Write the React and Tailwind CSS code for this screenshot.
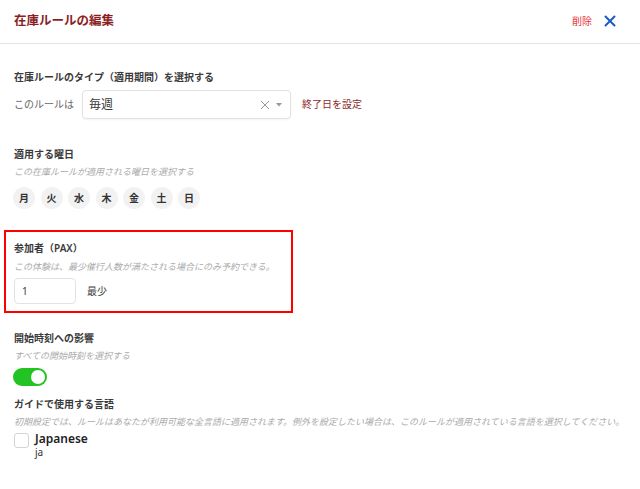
import React, { useState } from 'react'

const days = ['月', '火', '水', '木', '金', '土', '日']

export default function App() {
  const [on, setOn] = useState(true)
  const [checked, setChecked] = useState(false)

  return (
    <div className="w-[640px] h-[489px] bg-white overflow-hidden font-['Noto_Sans','Noto_Sans_CJK_JP',sans-serif] text-[#3a3a3a]">
      {/* Header */}
      <div className="h-[44px] border-b border-[#e4e4e4] flex items-center justify-between pl-[14px] pr-[24px]">
        <h1 className="text-[12.5px] font-bold text-[#8b1f1f] leading-none -mt-[1px]">在庫ルールの編集</h1>
        <div className="flex items-center gap-[12px] -mt-[1px]">
          <button className="text-[10px] text-[#e8343c] leading-none">削除</button>
          <svg width="12" height="12" viewBox="0 0 12 12" className="text-[#1a5bc7]">
            <path d="M1.5 1.5 L10.5 10.5 M10.5 1.5 L1.5 10.5" stroke="currentColor" strokeWidth="2" strokeLinecap="round" />
          </svg>
        </div>
      </div>

      <div className="px-[14px]">
        {/* Rule type */}
        <p className="mt-[26px] text-[10px] leading-[14px] font-semibold">在庫ルールのタイプ（適用期間）を選択する</p>
        <div className="mt-[6px] h-[29px] flex items-center">
          <span className="text-[10px] text-[#666] w-[68px]">このルールは</span>
          <div className="w-[209px] h-[29px] border border-[#e2e2e2] rounded-[4px] shadow-[0_1px_2px_rgba(0,0,0,0.05)] flex items-center pl-[6px] pr-[8px]">
            <span className="text-[12px] flex-1">毎週</span>
            <svg width="10" height="10" viewBox="0 0 10 10" className="text-[#9a9a9a]">
              <path d="M1 1 L9 9 M9 1 L1 9" stroke="currentColor" strokeWidth="1" />
            </svg>
            <svg width="6" height="4" viewBox="0 0 6 4" className="ml-[6px] text-[#999]">
              <path d="M0 0 L6 0 L3 3.5 Z" fill="currentColor" />
            </svg>
          </div>
          <button className="ml-[11px] text-[10px] text-[#8b2a2a]">終了日を設定</button>
        </div>

        {/* Days */}
        <p className="mt-[28px] text-[10px] leading-[14px] font-semibold">適用する曜日</p>
        <p className="mt-[4px] text-[9px] leading-[14px] italic text-[#aaa]">この在庫ルールが適用される曜日を選択する</p>
        <div className="mt-[8px] flex gap-[5.5px] -ml-[1px]">
          {days.map((d) => (
            <button key={d} className="w-[22px] h-[22px] rounded-full bg-[#f2f2f2] text-[10px] font-bold text-[#333] flex items-center justify-center">
              {d}
            </button>
          ))}
        </div>

        {/* PAX highlighted */}
        <div className="mt-[21px] -ml-[10px] w-[289px] border-2 border-[#ff0000] pl-[8px] pt-[9px] pb-[7px]">
          <p className="text-[10px] leading-[14px] font-semibold">参加者（PAX）</p>
          <p className="mt-[5px] text-[9px] leading-[14px] italic text-[#aaa]">この体験は、最少催行人数が満たされる場合にのみ予約できる。</p>
          <div className="mt-[4px] flex items-center">
            <div className="w-[62px] h-[26px] border border-[#e2e2e2] rounded-[4px] flex items-center pl-[7px] text-[10px]">1</div>
            <span className="ml-[11px] text-[10px]">最少</span>
          </div>
        </div>

        {/* Start times */}
        <p className="mt-[18px] text-[10px] leading-[14px] font-semibold">開始時刻への影響</p>
        <p className="mt-[4px] text-[9px] leading-[14px] italic text-[#aaa]">すべての開始時刻を選択する</p>
        <button
          onClick={() => setOn(!on)}
          className={`mt-[5px] -ml-[1px] w-[34px] h-[18px] rounded-full flex items-center px-[2px] ${on ? 'bg-[#22c322] justify-end' : 'bg-[#ccc] justify-start'}`}
        >
          <span className="w-[14px] h-[14px] rounded-full bg-white" />
        </button>

        {/* Languages */}
        <p className="mt-[11px] text-[10px] leading-[14px] font-semibold">ガイドで使用する言語</p>
        <p className="mt-[4px] text-[9px] leading-[14px] italic text-[#aaa] whitespace-nowrap">初期設定では、ルールはあなたが利用可能な全言語に適用されます。例外を設定したい場合は、このルールが適用されている言語を選択してください。</p>
        <div className="mt-[3px] flex items-start">
          <button
            onClick={() => setChecked(!checked)}
            className={`mt-[1px] w-[15px] h-[15px] rounded-[3px] border ${checked ? 'bg-[#1a5bc7] border-[#1a5bc7]' : 'border-[#d4d4d4] bg-white'}`}
          />
          <div className="ml-[6px]">
            <p className="text-[12px] leading-[13px] font-semibold text-[#222]">Japanese</p>
            <p className="mt-[2px] text-[10px] leading-[11px] text-[#333]">ja</p>
          </div>
        </div>
      </div>
    </div>
  )
}
